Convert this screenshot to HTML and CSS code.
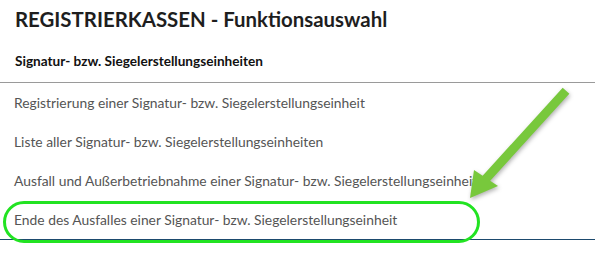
FILE: index.html
```html
<!DOCTYPE html>
<html lang="de">
<head>
<meta charset="utf-8">
<title>REGISTRIERKASSEN - Funktionsauswahl</title>
<link rel="stylesheet" href="styles.css">
</head>
<body>
<div class="page">
  <h1 class="title">REGISTRIERKASSEN - Funktionsauswahl</h1>
  <h2 class="subtitle">Signatur- bzw. Siegelerstellungseinheiten</h2>
  <ul class="menu">
    <li class="item">Registrierung einer Signatur- bzw. Siegelerstellungseinheit</li>
    <li class="item">Liste aller Signatur- bzw. Siegelerstellungseinheiten</li>
    <li class="item">Ausfall und Außerbetriebnahme einer Signatur- bzw. Siegelerstellungseinheit</li>
    <li class="item item-last">Ende des Ausfalles einer Signatur- bzw. Siegelerstellungseinheit<span class="ring"></span></li>
  </ul>
  <svg class="arrow" width="595" height="255" viewBox="0 0 595 255" aria-hidden="true">
    <line x1="563" y1="94" x2="484" y2="181" stroke="#78c83c" stroke-width="9" stroke-linecap="square"/>
    <polygon points="470,198 474,170 498,186" fill="#78c83c"/>
  </svg>
</div>
</body>
</html>
```
FILE: styles.css
```css
html, body {
  margin: 0;
  padding: 0;
  background: #ffffff;
}

.page {
  position: relative;
  width: 595px;
  height: 255px;
  overflow: hidden;
  font-family: "Lato", "Liberation Sans", sans-serif;
}

.title {
  margin: 0;
  padding: 5px 15px 0;
  font-size: 20.4px;
  line-height: 28px;
  font-weight: 700;
  color: #1e1e1e;
}

.subtitle {
  margin: 18px 0 0;
  padding: 0 15px 11px;
  font-size: 13.6px;
  line-height: 20px;
  font-weight: 700;
  color: #111111;
  border-bottom: 1px solid #9a9a9a;
}

.menu {
  list-style: none;
  margin: 0;
  padding: 0;
  border-bottom: 1px solid #1d4a6e;
}

.item {
  position: relative;
  padding: 10px 14px 9px;
  font-size: 13.85px;
  line-height: 20px;
  color: #555555;
}

.ring {
  position: absolute;
  left: 3px;
  top: 1px;
  width: 471px;
  height: 36px;
  border: 3px solid #22e322;
  border-radius: 21px;
}

.arrow {
  position: absolute;
  left: 0;
  top: 0;
  filter: drop-shadow(1px 2px 2px rgba(0, 0, 0, 0.3));
}
```
